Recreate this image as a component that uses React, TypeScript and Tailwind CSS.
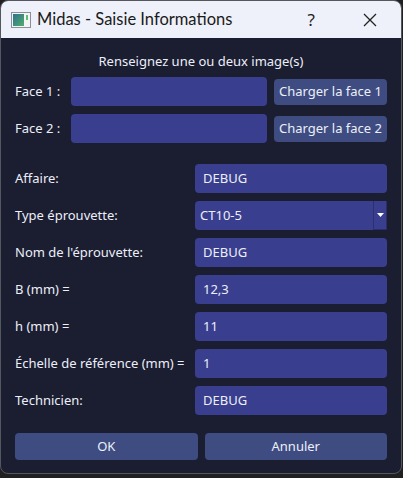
import React from "react";

const font = { fontFamily: '"Noto Sans", "Open Sans", sans-serif' };

function TitleIcon() {
  return (
    <svg width="20" height="16" viewBox="0 0 20 16" className="shrink-0">
      <defs>
        <linearGradient id="g1" x1="0" y1="0" x2="1" y2="1">
          <stop offset="0" stopColor="#2f6f8f" />
          <stop offset="1" stopColor="#4fae6a" />
        </linearGradient>
      </defs>
      <rect x="0.5" y="0.5" width="19" height="15" fill="#f4f4f4" stroke="#8a8f99" />
      <rect x="2" y="2" width="11" height="12" fill="url(#g1)" />
      <rect x="15" y="3" width="2" height="5" fill="#5fbf72" />
    </svg>
  );
}

function Row({ label, value }: { label: string; value: string }) {
  return (
    <div className="flex items-center h-[29px]">
      <div className="w-[180px] text-[13px] text-[#eceff8]">{label}</div>
      <div className="flex-1 h-[29px] rounded-[4px] bg-[#3a3e8e] flex items-center pl-[8px] text-[13px] text-[#eceff8]">
        {value}
      </div>
    </div>
  );
}

export default function App() {
  return (
    <div className="w-[403px] h-[478px] bg-[#202020] relative" style={font}>
      <div className="w-[402px] h-[474px] rounded-[8px] border border-[#55575f] overflow-hidden flex flex-col bg-[#1b1d31]">
        <div className="h-[37px] bg-[#eef1f9] flex items-center shrink-0">
          <div className="ml-[10px] mt-[1px] flex items-center">
            <TitleIcon />
          </div>
          <div className="ml-[6px] text-[16.5px] text-[#1a1a1a]" style={{ fontFamily: 'Lato, "Noto Sans", sans-serif' }}>
            Midas - Saisie Informations
          </div>
          <div className="ml-auto mr-[48px] text-[17px] text-[#222]">?</div>
          <svg width="14" height="14" viewBox="0 0 14 14" className="mr-[24px]">
            <path d="M1 1 L13 13 M13 1 L1 13" stroke="#222" strokeWidth="1.3" />
          </svg>
        </div>
        <div className="flex flex-col px-[14px]">
          <div className="mt-[14px] h-[18px] leading-[18px] text-center text-[13px] text-[#eceff8]">
            Renseignez une ou deux image(s)
          </div>
          <div className="mt-[7px] flex items-center h-[29px]">
            <div className="w-[56px] text-[13px] text-[#eceff8]">Face 1 :</div>
            <div className="w-[196px] h-[29px] rounded-[4px] bg-[#3a3e8e]" />
            <div className="ml-[7px] flex-1 h-[26px] rounded-[4px] bg-[#3e4c82] flex items-center justify-center text-[13px] text-[#eceff8]">
              Charger la face 1
            </div>
          </div>
          <div className="mt-[8px] flex items-center h-[29px]">
            <div className="w-[56px] text-[13px] text-[#eceff8]">Face 2 :</div>
            <div className="w-[196px] h-[29px] rounded-[4px] bg-[#3a3e8e]" />
            <div className="ml-[7px] flex-1 h-[26px] rounded-[4px] bg-[#3e4c82] flex items-center justify-center text-[13px] text-[#eceff8]">
              Charger la face 2
            </div>
          </div>
          <div className="mt-[21px] flex flex-col gap-[8px]">
            <Row label="Affaire:" value="DEBUG" />
            <div className="flex items-center h-[29px]">
              <div className="w-[180px] text-[13px] text-[#eceff8]">Type éprouvette:</div>
              <div className="flex-1 h-[29px] flex">
                <div className="flex-1 h-[29px] rounded-l-[4px] bg-[#3a3e8e] flex items-center pl-[5px] text-[13px] text-[#eceff8]">
                  CT10-5
                </div>
                <div className="w-[14px] h-[29px] bg-[#3a3e8e] border-l border-l-[#2c2f70] border-r border-r-[#2a2d68] border-b border-b-[#2a2d68] flex items-center justify-center">
                  <svg width="7" height="4" viewBox="0 0 7 4">
                    <path d="M0 0 L7 0 L3.5 4 Z" fill="#ffffff" />
                  </svg>
                </div>
              </div>
            </div>
            <Row label="Nom de l'éprouvette:" value="DEBUG" />
            <Row label="B (mm) =" value="12,3" />
            <Row label="h (mm) =" value="11" />
            <Row label="Échelle de référence (mm) =" value="1" />
            <Row label="Technicien:" value="DEBUG" />
          </div>
          <div className="mt-[18px] flex gap-[7px]">
            <div className="flex-1 h-[27px] rounded-[4px] bg-[#3e4c82] flex items-center justify-center text-[13px] text-[#eceff8]">
              OK
            </div>
            <div className="flex-1 h-[27px] rounded-[4px] bg-[#3e4c82] flex items-center justify-center text-[13px] text-[#eceff8]">
              Annuler
            </div>
          </div>
        </div>
      </div>
    </div>
  );
}
